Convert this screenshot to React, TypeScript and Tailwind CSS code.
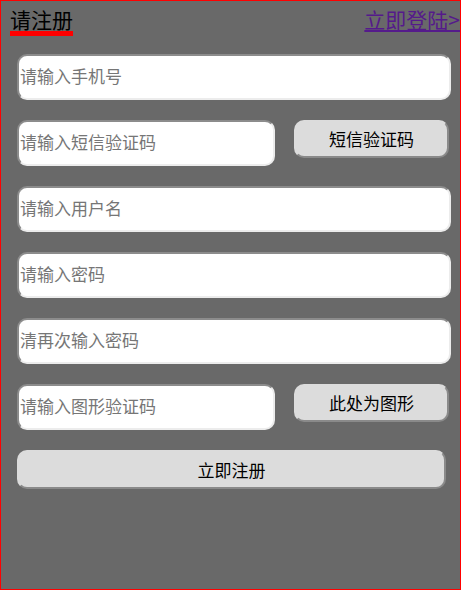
import { useState } from "react";

const inputCls =
  "h-[46px] rounded-[10px] border-2 border-t-[#8c8c8c] border-l-[#8c8c8c] border-b-[#ececec] border-r-[#ececec] bg-white px-[1px] pb-[3px] text-[17px] text-black outline-none placeholder:text-[#767676]";

const btnCls =
  "rounded-[10px] border-2 border-t-[#dcdcdc] border-l-[#dcdcdc] border-b-[#8a8a8a] border-r-[#8a8a8a] bg-[#dcdcdc] text-[17px] text-black";

export default function App() {
  const [phone, setPhone] = useState("");
  const [sms, setSms] = useState("");
  const [user, setUser] = useState("");
  const [pwd, setPwd] = useState("");
  const [pwd2, setPwd2] = useState("");
  const [captcha, setCaptcha] = useState("");

  return (
    <div
      className="w-[461px] h-[590px] border border-[#f00] bg-[#696969]"
      style={{ fontFamily: '"Noto Sans CJK SC", "Noto Sans", sans-serif' }}
    >
      <div className="flex justify-between items-start pl-[9px] pt-[6px] h-[53px]">
        <span className="text-[21px] leading-[24px] text-black border-b-[5px] border-[#f00]">
          请注册
        </span>
        <a href="#" className="text-[21px] leading-[24px] text-[#551a8b] underline">
          立即登陆&gt;
        </a>
      </div>

      <div className="flex flex-col gap-[20px] pl-[16px]">
        <input
          className={`${inputCls} w-[434px]`}
          placeholder="请输入手机号"
          value={phone}
          onChange={(e) => setPhone(e.target.value)}
        />
        <div className="flex items-start gap-[19px]">
          <input
            className={`${inputCls} w-[258px]`}
            placeholder="请输入短信验证码"
            value={sms}
            onChange={(e) => setSms(e.target.value)}
          />
          <button className={`${btnCls} w-[155px] h-[38px]`}>短信验证码</button>
        </div>
        <input
          className={`${inputCls} w-[434px]`}
          placeholder="请输入用户名"
          value={user}
          onChange={(e) => setUser(e.target.value)}
        />
        <input
          className={`${inputCls} w-[434px]`}
          type="password"
          placeholder="请输入密码"
          value={pwd}
          onChange={(e) => setPwd(e.target.value)}
        />
        <input
          className={`${inputCls} w-[434px]`}
          type="password"
          placeholder="清再次输入密码"
          value={pwd2}
          onChange={(e) => setPwd2(e.target.value)}
        />
        <div className="flex items-start gap-[19px]">
          <input
            className={`${inputCls} w-[258px]`}
            placeholder="请输入图形验证码"
            value={captcha}
            onChange={(e) => setCaptcha(e.target.value)}
          />
          <button className={`${btnCls} w-[155px] h-[38px]`}>此处为图形</button>
        </div>
        <button className={`${btnCls} w-[429px] h-[39px]`}>立即注册</button>
      </div>
    </div>
  );
}
